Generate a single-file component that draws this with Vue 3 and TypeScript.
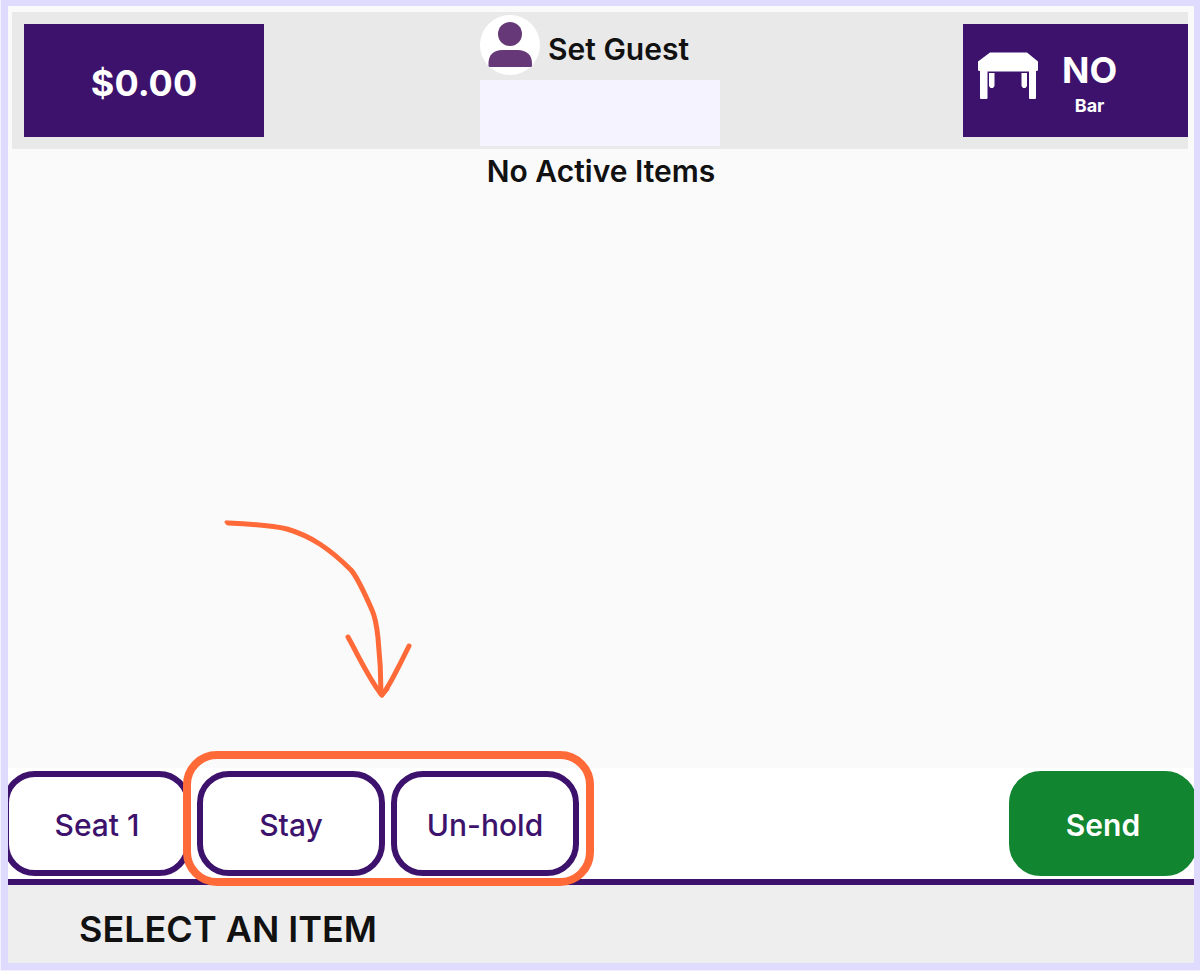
<script setup lang="ts">
import { ref } from 'vue'

const total = ref('$0.00')
const tableName = ref('NO')
const area = ref('Bar')
const holdActions = ['Stay', 'Un-hold']
</script>

<template>
  <div class="page">
    <main class="screen">
      <header class="top">
        <button type="button" class="tile total">{{ total }}</button>
        <div class="guest">
          <button type="button" class="set-guest">
            <svg class="avatar" viewBox="0 0 60 60" aria-hidden="true">
              <circle cx="30" cy="30" r="30" fill="#fff" />
              <circle cx="30" cy="19" r="12" fill="#663878" />
              <path d="M8.5 50.5V48C8.5 40 14 35 22 35H38C46 35 52 40 52 48V50.5Q52 52 50.5 52H10Q8.5 52 8.5 50.5Z" fill="#663878" />
            </svg>
            <span>Set Guest</span>
          </button>
          <div class="guest-info"></div>
        </div>
        <button type="button" class="tile table">
          <svg class="table-icon" viewBox="0 0 60 48" aria-hidden="true" fill="#fff">
            <path d="M12 0.5H49L60 9.5V18Q60 19 58 19V46Q58 47 57 47H52Q51 47 51 46V19.5H9.5V46Q9.5 47 8.5 47H3Q2 47 2 46V19Q0 19 0 18V9.5Z" />
            <path d="M11 21H16.5V34L15 36H12.5L11 34ZM43.5 21H49V34L47.5 36H45L43.5 34Z" />
          </svg>
          <span class="table-text">
            <strong>{{ tableName }}</strong>
            <small>{{ area }}</small>
          </span>
        </button>
      </header>

      <section class="items">
        <h1>No Active Items</h1>
      </section>

      <div class="actions">
        <button type="button" class="action">Seat 1</button>
        <div class="hold-group">
          <button v-for="name in holdActions" :key="name" type="button" class="action">{{ name }}</button>
          <svg class="arrow" viewBox="0 0 200 190" aria-hidden="true" fill="none" stroke="#ff6a38" stroke-linecap="round" stroke-linejoin="round">
            <path stroke-width="5" d="M16 13C41 14 59 15 75 19C99 26 118 39 139 60C146 68 153 84 160 100C164 109 165 118 166 128C168 147 169 166 169 184" />
            <path stroke-width="5" d="M136 127C145 143 158 171 170 185C178 175 182 165 187 156L197 136" />
            <path stroke-width="3" d="M14 12L19 13M164 177L170 186L176 179" />
          </svg>
        </div>
        <button type="button" class="action send">Send</button>
      </div>

      <footer class="prompt">
        <h2>SELECT AN ITEM</h2>
      </footer>
    </main>
  </div>
</template>

<style>
body {
  margin: 0;
}
</style>

<style scoped>
* {
  box-sizing: border-box;
}

.page {
  min-height: 100vh;
  display: flex;
  padding: 0 0 1px 1px;
  background: #f3f0ff;
  font-family: Inter, "Liberation Sans", sans-serif;
  color: #111;
}

button {
  margin: 0;
  padding: 0;
  border: 0;
  font: inherit;
  color: inherit;
  cursor: pointer;
}

h1,
h2 {
  margin: 0;
}

.screen {
  flex: 1;
  min-width: 0;
  display: flex;
  flex-direction: column;
  overflow: hidden;
  border: 7px solid #dfdbff;
  border-width: 6px 6px 7px 7px;
  background: #fafafa;
}

.top {
  display: grid;
  grid-template-columns: 1fr 240px 1fr;
  height: 137px;
  margin: 6px 6px 0 4px;
  background: #e9e9e9;
}

.tile {
  height: 113px;
  margin-top: 12px;
  background: #3d126c;
  color: #fff;
}

.total {
  width: 240px;
  margin-left: 12px;
  padding-top: 4px;
  font-size: 36px;
  font-weight: 700;
}

.guest {
  padding-top: 3px;
}

.set-guest {
  display: flex;
  align-items: center;
  gap: 8px;
  background: none;
  font-size: 30px;
  font-weight: 600;
  line-height: 36px;
  white-space: nowrap;
}

.set-guest span {
  padding-top: 8px;
}

.avatar {
  width: 60px;
  height: 60px;
}

.guest-info {
  height: 66px;
  margin-top: 5px;
  background: #f5f3ff;
}

.table {
  justify-self: end;
  width: 225px;
  display: flex;
  align-items: flex-start;
  gap: 24px;
  padding: 28px 15px 0;
}

.table-icon {
  width: 60px;
  height: 48px;
}

.table-text {
  display: flex;
  flex-direction: column;
  align-items: center;
}

.table-text strong {
  font-size: 36px;
  font-weight: 700;
  line-height: 36px;
}

.table-text small {
  font-size: 18px;
  font-weight: 700;
  line-height: 36px;
}

.items {
  flex: 1;
  padding-top: 4px;
  text-align: center;
}

.items h1 {
  font-size: 30px;
  font-weight: 600;
  line-height: 36px;
}

.actions {
  display: flex;
  gap: 6px;
  padding: 3px 0;
  margin: 0 -3px 0 -5px;
  background: #fff;
  border-bottom: 6px solid #3d126c;
}

.action {
  width: 188px;
  height: 105px;
  padding-top: 2px;
  border: 6px solid #3d126c;
  border-radius: 32px;
  background: #fff;
  color: #3d126c;
  font-size: 30px;
  font-weight: 500;
}

.send {
  margin-left: auto;
  border-color: #128531;
  background: #128531;
  color: #fff;
  font-weight: 600;
}

.hold-group {
  position: relative;
  display: flex;
  gap: 6px;
}

.hold-group::after {
  content: "";
  position: absolute;
  inset: -20px -15px -10px -14px;
  border: 8px solid #ff6a38;
  border-radius: 34px;
  pointer-events: none;
}

.arrow {
  position: absolute;
  left: 15px;
  bottom: 176px;
  width: 200px;
  height: 190px;
  pointer-events: none;
}

.prompt {
  padding: 22px 71px 12px;
  background: #eee;
}

.prompt h2 {
  font-size: 36px;
  font-weight: 600;
  line-height: 44px;
}
</style>
